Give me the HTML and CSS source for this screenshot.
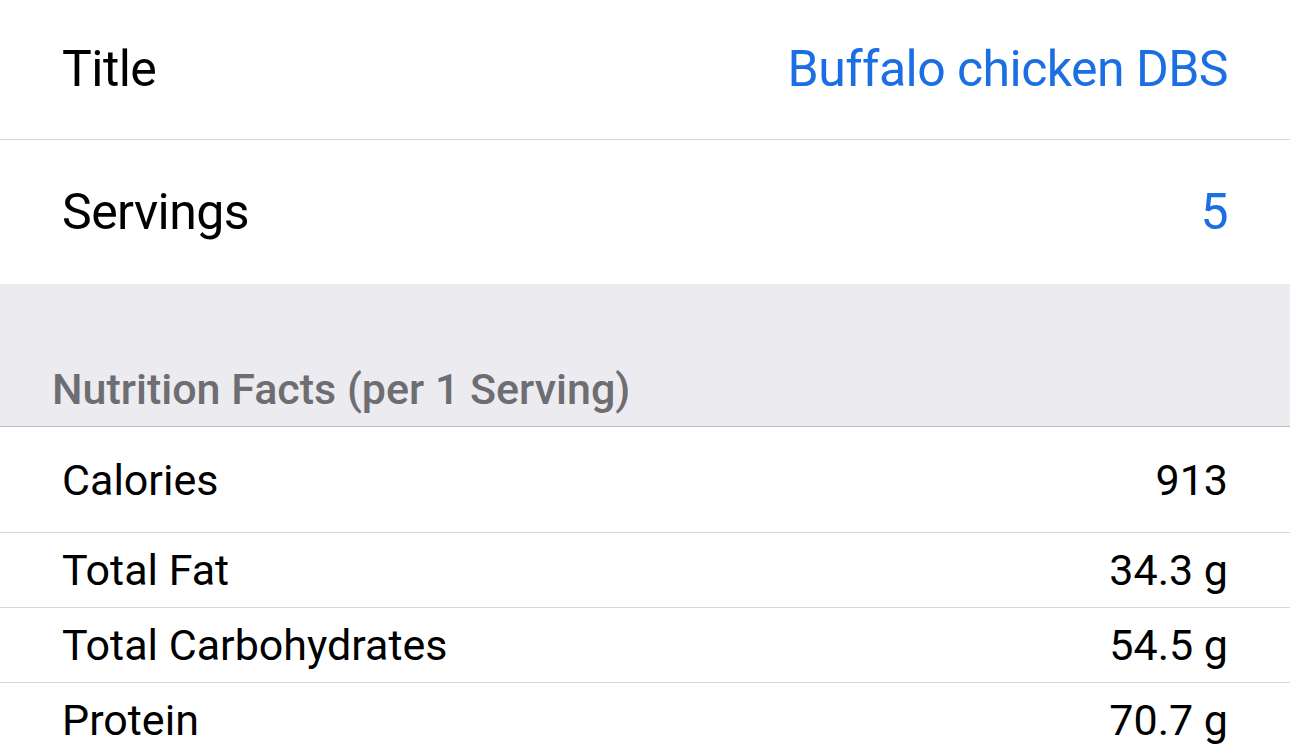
FILE: index.html
```html
<!DOCTYPE html>
<html>
<head>
<meta charset="utf-8">
<link rel="stylesheet" href="styles.css">
</head>
<body>
<div class="screen">
  <div class="row row-big row-title">
    <span class="label">Title</span>
    <span class="value link">Buffalo chicken DBS</span>
  </div>
  <div class="row row-big row-servings">
    <span class="label">Servings</span>
    <span class="value link">5</span>
  </div>
  <div class="section-header">
    <span class="section-title">Nutrition Facts (per 1 Serving)</span>
  </div>
  <div class="row row-cal sep">
    <span class="label small">Calories</span>
    <span class="value small">913</span>
  </div>
  <div class="row row-n sep">
    <span class="label small">Total Fat</span>
    <span class="value small">34.3 g</span>
  </div>
  <div class="row row-n sep">
    <span class="label small">Total Carbohydrates</span>
    <span class="value small">54.5 g</span>
  </div>
  <div class="row row-n">
    <span class="label small">Protein</span>
    <span class="value small">70.7 g</span>
  </div>
</div>
</body>
</html>
```
FILE: styles.css
```css
html, body {
  margin: 0;
  padding: 0;
  background: #ffffff;
}
body {
  font-family: Roboto, "Liberation Sans", sans-serif;
  color: #000;
  overflow: hidden;
}
.screen {
  width: 1290px;
  display: flex;
  flex-direction: column;
}
.row {
  display: flex;
  align-items: center;
  justify-content: space-between;
  padding: 0 62px;
  background: #fff;
  flex-shrink: 0;
}
.row-title {
  height: 139px;
  border-bottom: 1px solid #d8d8dc;
}
.row-servings {
  height: 144px;
}
.row-big .label,
.row-big .value {
  font-size: 50px;
  line-height: 60px;
  letter-spacing: -0.55px;
}
.row-title .label,
.row-title .value {
  position: relative;
  top: -1px;
}
.link {
  color: #1b6fe2;
}
.section-header {
  height: 143px;
  background: #ebebf0;
  border-bottom: 1px solid #bcbcc0;
  display: flex;
  align-items: flex-end;
  padding: 0 50px 12px 52px;
  box-sizing: border-box;
}
.section-title {
  font-size: 43px;
  line-height: 50px;
  font-weight: 500;
  color: #6d6d72;
}
.small {
  font-size: 43px;
  line-height: 50px;
}
.sep {
  border-bottom: 1px solid #d8d8dc;
}
.row-cal {
  height: 105px;
}
.row-n {
  height: 74px;
}
```
